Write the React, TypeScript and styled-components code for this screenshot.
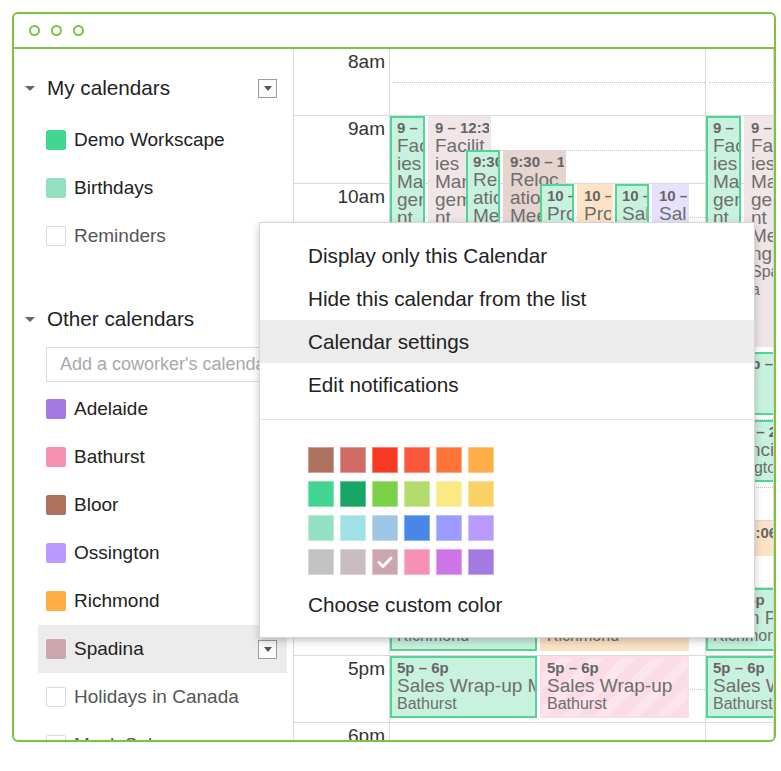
import React from "react";
import styled, { createGlobalStyle } from "styled-components";

const HOUR = 67.4;
const GREEN = "#7cc243";
const LINE = "#dadada";

const at = (h: number) => (h - 8) * HOUR;

type Kind = "green" | "spadina" | "bloor" | "richmond" | "ossington" | "bathurst";

interface Ev {
  kind: Kind;
  left: number;
  width: number;
  start: number;
  end: number;
  time: string;
  title: string[];
  loc?: string[];
}

const kinds: Record<Kind, { bg: string; border: string }> = {
  green: { bg: "#c8f2de", border: "#52d594" },
  spadina: { bg: "#f1e6e7", border: "#f1e6e7" },
  bloor: { bg: "#e5d4cf", border: "#e5d4cf" },
  richmond: { bg: "#fde3c6", border: "#fde3c6" },
  ossington: { bg: "#e7e1fd", border: "#e7e1fd" },
  bathurst: { bg: "#fcdde7", border: "#fcdde7" },
};

const facilities = ["Facilit", "ies", "Mana", "geme", "nt", "Meeti", "ng"];
const relocation = ["Reloc", "ation", "Meeti", "ng"];

const dayOne: Ev[] = [
  { kind: "green", left: 0, width: 35, start: 9, end: 12, time: "9 – 12p", title: facilities },
  { kind: "spadina", left: 38, width: 63, start: 9, end: 12.5, time: "9 – 12:30p", title: facilities, loc: ["Spadin", "a"] },
  { kind: "green", left: 76, width: 34, start: 9.5, end: 11, time: "9:30 – 11a", title: relocation },
  { kind: "bloor", left: 113, width: 63, start: 9.5, end: 11, time: "9:30 – 11a", title: relocation, loc: ["Bloor"] },
  { kind: "green", left: 150, width: 34, start: 10, end: 11.5, time: "10 – 11:30", title: ["Pro", "duct", "Revi", "ew"] },
  { kind: "richmond", left: 187, width: 36, start: 10, end: 11.5, time: "10 – 11:30", title: ["Pro", "duct", "Revi", "ew"] },
  { kind: "green", left: 225, width: 34, start: 10, end: 11, time: "10 – 11", title: ["Sal", "es"] },
  { kind: "ossington", left: 262, width: 37, start: 10, end: 11, time: "10 – 11", title: ["Sal", "es"] },
  { kind: "green", left: 0, width: 147, start: 16, end: 17, time: "4p – 5p", title: ["Team Payroll"], loc: ["Richmond"] },
  { kind: "richmond", left: 150, width: 149, start: 16, end: 17, time: "4p – 5p", title: ["Team Payroll"], loc: ["Richmond"] },
  { kind: "green", left: 0, width: 147, start: 17, end: 18, time: "5p – 6p", title: ["Sales Wrap-up Meeting"], loc: ["Bathurst"] },
  { kind: "bathurst", left: 150, width: 149, start: 17, end: 18, time: "5p – 6p", title: ["Sales Wrap-up"], loc: ["Bathurst"] },
];

const dayTwo: Ev[] = [
  { kind: "green", left: 0, width: 35, start: 9, end: 12, time: "9 – 12p", title: facilities },
  { kind: "spadina", left: 38, width: 44, start: 9, end: 12.5, time: "9 – 12:30p", title: facilities, loc: ["Spadin", "a"] },
  { kind: "green", left: 0, width: 72, start: 12.5, end: 13.5, time: "12:30p – 1:30p", title: ["Call"] },
  { kind: "green", left: 0, width: 72, start: 13.5, end: 14.5, time: "1:30p – 2:30p", title: ["Financial Review"], loc: ["Ossington"] },
  { kind: "richmond", left: 0, width: 72, start: 15, end: 15.6, time: "3p – 3:06p", title: [] },
  { kind: "green", left: 0, width: 72, start: 16, end: 17, time: "4p – 5p", title: ["Team Payroll"], loc: ["Richmond"] },
  { kind: "green", left: 0, width: 72, start: 17, end: 18, time: "5p – 6p", title: ["Sales Wrap-up"], loc: ["Bathurst"] },
];

const hours = ["8am", "9am", "10am", "11am", "12pm", "1pm", "2pm", "3pm", "4pm", "5pm", "6pm"];

const myCalendars = [
  { name: "Demo Workscape", color: "#42d692" },
  { name: "Birthdays", color: "#92e1c0" },
  { name: "Reminders", color: "" },
];

const otherCalendars = [
  { name: "Adelaide", color: "#a47ae2" },
  { name: "Bathurst", color: "#f691b2" },
  { name: "Bloor", color: "#ac725e" },
  { name: "Ossington", color: "#b99aff" },
  { name: "Richmond", color: "#ffad46" },
  { name: "Spadina", color: "#cca6ac", active: true },
  { name: "Holidays in Canada", color: "" },
  { name: "Mock Sales", color: "" },
];

const palette = [
  "#ac725e", "#d06b64", "#f83a22", "#fa573c", "#ff7537", "#ffad46",
  "#42d692", "#16a765", "#7bd148", "#b3dc6c", "#fbe983", "#fad165",
  "#92e1c0", "#9fe1e7", "#9fc6e7", "#4986e7", "#9a9cff", "#b99aff",
  "#c2c2c2", "#cabdbf", "#cca6ac", "#f691b2", "#cd74e6", "#a47ae2",
];

const GlobalStyle = createGlobalStyle`
  body {
    margin: 0;
    background: #fff;
    font-family: "Liberation Sans", Arial, sans-serif;
  }
`;

const Frame = styled.div`
  position: relative;
  margin: 12px 0 0 12px;
  width: 764px;
  height: 730px;
  box-sizing: border-box;
  border: 2px solid ${GREEN};
  border-radius: 6px;
  overflow: hidden;
  display: flex;
  flex-direction: column;
`;

const TitleBar = styled.div`
  flex-shrink: 0;
  height: 33px;
  border-bottom: 2px solid ${GREEN};
  display: flex;
  align-items: center;
  gap: 11px;
  padding-left: 15px;
`;

const Dot = styled.span`
  width: 11px;
  height: 11px;
  box-sizing: border-box;
  border: 2px solid ${GREEN};
  border-radius: 50%;
`;

const Body = styled.div`
  flex: 1;
  min-height: 0;
  display: flex;
`;

const Sidebar = styled.div`
  width: 280px;
  flex-shrink: 0;
  box-sizing: border-box;
  border-right: 1px solid ${LINE};
  padding: 19px 0 0 8px;
`;

const SectionHeader = styled.div<{ $gap?: number }>`
  display: flex;
  align-items: center;
  width: 265px;
  height: 40px;
  box-sizing: border-box;
  padding-right: 10px;
  margin-top: ${({ $gap }) => $gap ?? 0}px;
  margin-bottom: 8px;
`;

const Caret = styled.span`
  width: 0;
  height: 0;
  border-left: 5px solid transparent;
  border-right: 5px solid transparent;
  border-top: 5px solid #666;
  margin: 0 12px 0 3px;
`;

const HeaderLabel = styled.span`
  flex: 1;
  font-size: 20.7px;
  color: #222;
`;

const DropButton = styled.span`
  width: 19px;
  height: 19px;
  box-sizing: border-box;
  border: 1px solid #9c9c9c;
  background: #fafafa;
  display: flex;
  align-items: center;
  justify-content: center;

  &::after {
    content: "";
    border-left: 4.5px solid transparent;
    border-right: 4.5px solid transparent;
    border-top: 5px solid #555;
    margin-top: 1px;
  }
`;

const CalRow = styled.div<{ $active?: boolean }>`
  margin-left: 16px;
  width: 249px;
  height: 48px;
  box-sizing: border-box;
  padding: 0 10px 0 8px;
  display: flex;
  align-items: center;
  background: ${({ $active }) => ($active ? "#ececec" : "transparent")};
`;

const Swatch = styled.span<{ $color: string }>`
  width: 20px;
  height: 20px;
  box-sizing: border-box;
  border-radius: 2px;
  background: ${({ $color }) => $color || "#fff"};
  border: 1px solid ${({ $color }) => $color || "#d9d9d9"};
`;

const CalName = styled.span<{ $muted?: boolean }>`
  flex: 1;
  margin-left: 8px;
  font-size: 19px;
  color: ${({ $muted }) => ($muted ? "#555" : "#222")};
  white-space: nowrap;
`;

const AddInput = styled.input`
  display: block;
  margin: 8px 0 3px 24px;
  width: 231px;
  height: 35px;
  box-sizing: border-box;
  border: 1px solid #d9d9d9;
  padding: 0 0 0 13px;
  font-family: "Liberation Sans", Arial, sans-serif;
  font-size: 18px;
  color: #333;
  outline: none;

  &::placeholder {
    color: #a9a9a9;
  }
`;

const TimeCol = styled.div`
  width: 96px;
  flex-shrink: 0;
  box-sizing: border-box;
  border-right: 1px solid ${LINE};
`;

const HourLabel = styled.div`
  height: ${HOUR}px;
  box-sizing: border-box;
  border-bottom: 1px solid ${LINE};
  padding: 2px 4px 0 0;
  text-align: right;
  font-size: 19px;
  line-height: 22px;
  color: #333;
`;

const DayCol = styled.div<{ $width?: number }>`
  position: relative;
  overflow: hidden;
  box-sizing: border-box;
  ${({ $width }) => ($width ? `width: ${$width}px; flex-shrink: 0;` : "flex: 1;")}
  border-right: 1px solid ${LINE};
`;

const HourSlot = styled.div`
  position: relative;
  height: ${HOUR}px;
  box-sizing: border-box;
  border-bottom: 1px solid ${LINE};

  &::after {
    content: "";
    position: absolute;
    left: 3px;
    right: 0;
    top: 50%;
    border-top: 1px dotted #c4c4c4;
  }
`;

const EventBox = styled.div<{ $kind: Kind }>`
  position: absolute;
  box-sizing: border-box;
  overflow: hidden;
  padding: 1px 5px;
  border: 2px solid ${({ $kind }) => kinds[$kind].border};
  background: ${({ $kind }) =>
    $kind === "bathurst"
      ? "repeating-linear-gradient(135deg, #fbdbe6 0 12px, #fde5ed 12px 22px)"
      : kinds[$kind].bg};
  color: #6e6e6e;
  white-space: nowrap;
`;

const EventTime = styled.div`
  font-size: 15px;
  font-weight: bold;
  line-height: 18px;
  color: #666;
`;

const EventTitle = styled.div`
  font-size: 19px;
  line-height: 18px;
`;

const EventLoc = styled.div`
  font-size: 16px;
  line-height: 18px;
`;

const Menu = styled.div`
  position: absolute;
  left: 245px;
  top: 208px;
  width: 496px;
  box-sizing: border-box;
  background: #fff;
  border: 1px solid rgba(0, 0, 0, 0.16);
  box-shadow: 0 3px 8px rgba(0, 0, 0, 0.22);
  padding: 11px 0;
  z-index: 10;
`;

const MenuItem = styled.div<{ $hl?: boolean; $gap?: number }>`
  height: 43px;
  display: flex;
  align-items: center;
  padding-left: 48px;
  margin-top: ${({ $gap }) => $gap ?? 0}px;
  font-size: 20.7px;
  color: #222;
  background: ${({ $hl }) => ($hl ? "#ececec" : "transparent")};
`;

const Separator = styled.div`
  margin-top: 13px;
  border-top: 1px solid #e6e6e6;
`;

const PaletteGrid = styled.div`
  margin: 27px 0 0 48px;
  display: grid;
  grid-template-columns: repeat(6, 26px);
  column-gap: 6px;
  row-gap: 8px;
`;

const PaletteCell = styled.div<{ $color: string }>`
  width: 26px;
  height: 26px;
  background: ${({ $color }) => $color};
  box-shadow: inset 0 0 0 1px rgba(255, 255, 255, 0.35);
  display: flex;
  align-items: center;
  justify-content: center;
`;

const EventCard: React.FC<{ ev: Ev }> = ({ ev }) => (
  <EventBox
    $kind={ev.kind}
    style={{
      left: ev.left,
      width: ev.width,
      top: at(ev.start),
      height: (ev.end - ev.start) * HOUR - 5,
    }}
  >
    <EventTime>{ev.time}</EventTime>
    {ev.title.map((t, i) => (
      <EventTitle key={i}>{t}</EventTitle>
    ))}
    {ev.loc?.map((t, i) => (
      <EventLoc key={i}>{t}</EventLoc>
    ))}
  </EventBox>
);

const Day: React.FC<{ events: Ev[]; width?: number }> = ({ events, width }) => (
  <DayCol $width={width}>
    {hours.map((h) => (
      <HourSlot key={h} />
    ))}
    {events.map((ev, i) => (
      <EventCard key={i} ev={ev} />
    ))}
  </DayCol>
);

const Check = () => (
  <svg width="18" height="18" viewBox="0 0 18 18">
    <polyline
      points="3,9.5 7,13.5 15,5"
      fill="none"
      stroke="#fff"
      strokeWidth="3"
      strokeLinecap="round"
      strokeLinejoin="round"
    />
  </svg>
);

export default function App() {
  return (
    <>
      <GlobalStyle />
      <Frame>
        <TitleBar>
          <Dot />
          <Dot />
          <Dot />
        </TitleBar>
        <Body>
          <Sidebar>
            <SectionHeader>
              <Caret />
              <HeaderLabel>My calendars</HeaderLabel>
              <DropButton />
            </SectionHeader>
            {myCalendars.map((c) => (
              <CalRow key={c.name}>
                <Swatch $color={c.color} />
                <CalName $muted={!c.color}>{c.name}</CalName>
              </CalRow>
            ))}
            <SectionHeader $gap={39}>
              <Caret />
              <HeaderLabel>Other calendars</HeaderLabel>
            </SectionHeader>
            <AddInput placeholder="Add a coworker's calendar" readOnly />
            {otherCalendars.map((c) => (
              <CalRow key={c.name} $active={c.active}>
                <Swatch $color={c.color} />
                <CalName $muted={!c.color}>{c.name}</CalName>
                {c.active && <DropButton />}
              </CalRow>
            ))}
          </Sidebar>
          <TimeCol>
            {hours.map((h) => (
              <HourLabel key={h}>{h}</HourLabel>
            ))}
          </TimeCol>
          <Day events={dayOne} width={316} />
          <Day events={dayTwo} />
        </Body>
        <Menu>
          <MenuItem>Display only this Calendar</MenuItem>
          <MenuItem>Hide this calendar from the list</MenuItem>
          <MenuItem $hl>Calendar settings</MenuItem>
          <MenuItem>Edit notifications</MenuItem>
          <Separator />
          <PaletteGrid>
            {palette.map((c, i) => (
              <PaletteCell key={i} $color={c}>
                {i === 20 && <Check />}
              </PaletteCell>
            ))}
          </PaletteGrid>
          <MenuItem $gap={8}>Choose custom color</MenuItem>
        </Menu>
      </Frame>
    </>
  );
}
